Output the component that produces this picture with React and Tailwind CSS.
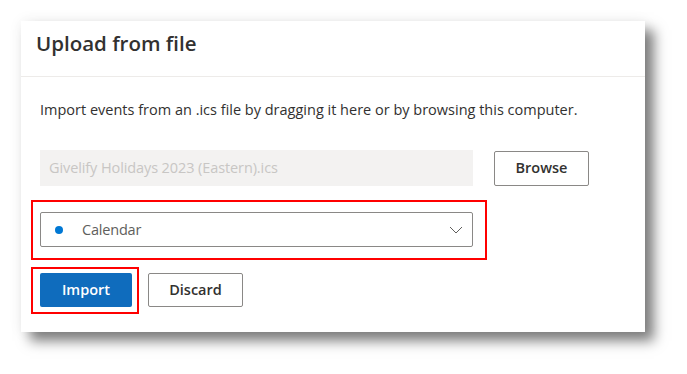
export default function App() {
  return (
    <div className="w-[687px] h-[374px] bg-white overflow-hidden" style={{ fontFamily: '"Open Sans", "Noto Sans", sans-serif' }}>
      <div className="ml-[21px] mt-[21px] w-[624px] h-[311px] bg-white shadow-[9px_9px_12px_rgba(0,0,0,0.5),0_0_14px_rgba(0,0,0,0.06)] flex flex-col">
        <div className="h-[56px] border-b border-[#edebe9] pl-[15px] pb-[10px] flex items-center">
          <h1 className="text-[20.5px] font-semibold text-[#323130] leading-none">Upload from file</h1>
        </div>
        <div className="pl-[19px] flex flex-col">
          <p className="mt-[23px] text-[14.5px] leading-[20px] text-[#323130]">
            Import events from an .ics file by dragging it here or by browsing this computer.
          </p>
          <div className="mt-[30px] flex items-center gap-[21px]">
            <div className="w-[433px] h-[36px] bg-[#f3f2f1] flex items-center pl-[9px] text-[14.5px] text-[#c8c6c4] tracking-[-0.1px]">
              Givelify Holidays 2023 (Eastern).ics
            </div>
            <button className="w-[95px] h-[35px] border border-[#8a8886] rounded-[2px] bg-white text-[14.5px] font-semibold text-[#323130] flex items-center justify-center">
              Browse
            </button>
          </div>
          <div className="mt-[14px] -ml-[9px] w-[456px] h-[60px] border-2 border-[#ff0000] pl-[7px] pt-[10px]">
            <div className="w-[433px] h-[35px] border border-[#8a8886] rounded-[2px] flex items-center pl-[14px] pr-[9px]">
              <span className="w-[8px] h-[8px] rounded-full bg-[#0078d4]" />
              <span className="ml-[19px] text-[14.5px] text-[#605e5c] flex-1 tracking-[-0.2px]">Calendar</span>
              <svg width="14" height="8" viewBox="0 0 14 8" fill="none">
                <path d="M1 1l6 6 6-6" stroke="#605e5c" strokeWidth="1" />
              </svg>
            </div>
          </div>
          <div className="mt-[7px] flex items-center">
            <div className="-ml-[9px] w-[108px] h-[47px] border-2 border-[#ff0000] pl-[7px] pt-[4px]">
              <button className="w-[92px] h-[34px] bg-[#0f6cbd] rounded-[2px] text-white text-[14.5px] font-semibold flex items-center justify-center">
                Import
              </button>
            </div>
            <button className="ml-[9px] -mt-[1px] w-[95px] h-[34px] border border-[#8a8886] rounded-[2px] bg-white text-[14.5px] font-semibold text-[#323130] flex items-center justify-center">
              Discard
            </button>
          </div>
        </div>
      </div>
    </div>
  );
}
